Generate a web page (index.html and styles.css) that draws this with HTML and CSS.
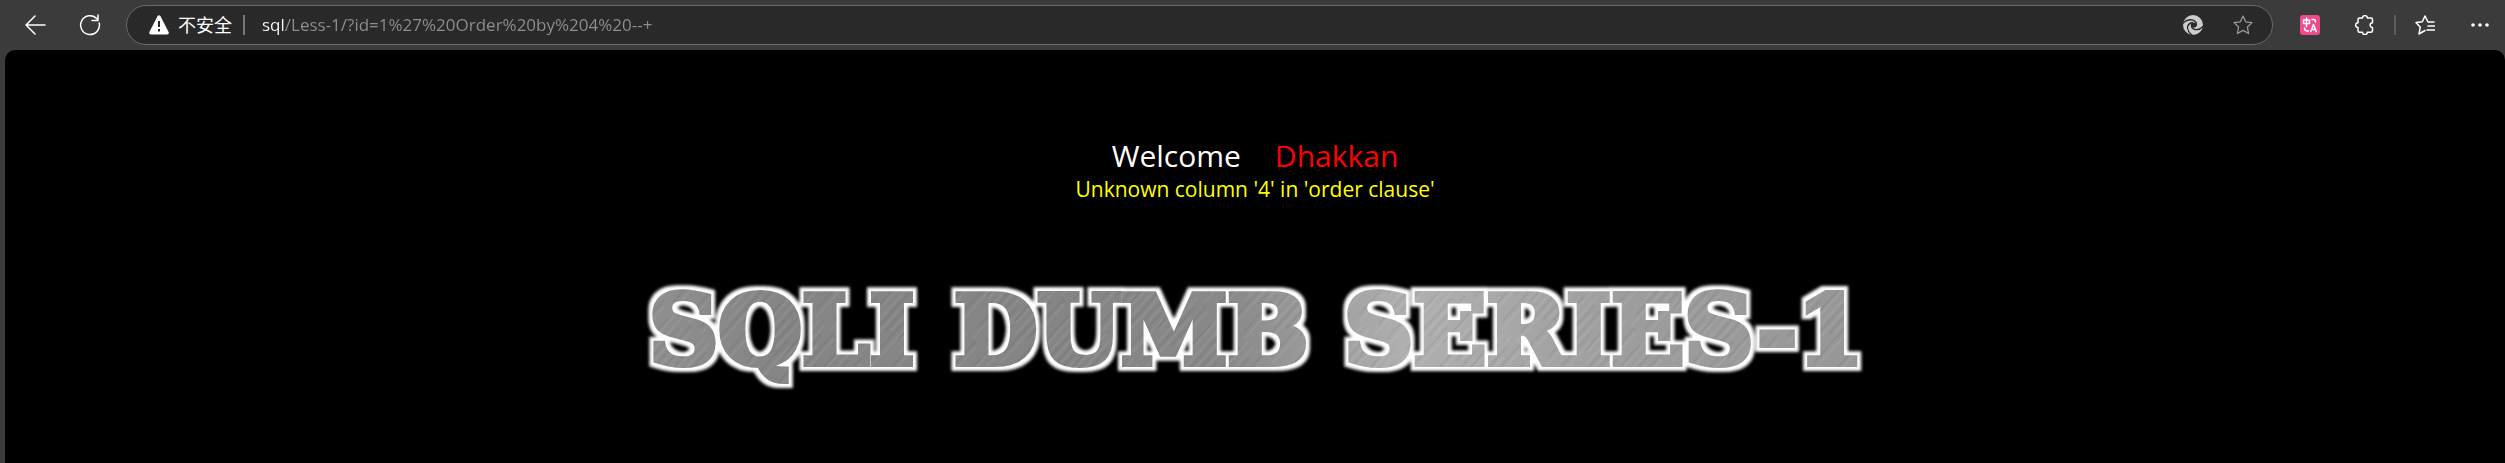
FILE: index.html
```html
<!DOCTYPE html>
<html lang="en">
<head>
<meta charset="utf-8">
<title>Less-1</title>
<link rel="stylesheet" href="styles.css">
</head>
<body>
<header class="toolbar">
  <nav class="nav">
    <button class="icon-button" type="button" aria-label="Back">
      <svg width="22" height="22" viewBox="0 0 22 22"><path d="M21 11H2M11 2L2 11l9 9"/></svg>
    </button>
    <button class="icon-button" type="button" aria-label="Reload">
      <svg width="22" height="22" viewBox="0 0 22 22"><path d="M20.2 9A9.4 9.4 0 1 1 18 4.8M19 1v5.5h-6"/></svg>
    </button>
  </nav>
  <form class="address">
    <button class="security" type="button">
      <svg width="20" height="20" viewBox="0 0 20 20"><path class="solid" d="M8.500 1.300Q10-.8 11.500 1.300L19.600 17q.8 2.400-1.600 2.600H2Q-.4 19.400.4 17z"/><path class="mark" d="M10 6v6M10 14v2.400"/></svg>
      <span>不安全</span>
    </button>
    <span class="divider"></span>
    <input class="url" type="text" aria-label="Address" value="sql/Less-1/?id=1%27%20Order%20by%204%20--+">
    <button class="icon-button" type="button" aria-label="Search this page">
      <svg width="20" height="20" viewBox="0 0 20 20"><circle class="disc" cx="10" cy="10" r="10"/><circle class="hole" cx="11" cy="10" r="2.600"/><path class="swirl" d="M0 8Q5 3.500 10 5.200 13.500 6.500 13.500 10M8.500 9.500Q8 13.500 12 14.500 16.500 15.500 20 11.500M9.500 7.500Q4.500 8.500 4.500 13 5 17 9 20"/></svg>
    </button>
    <button class="icon-button muted" type="button" aria-label="Add to favorites">
      <svg width="20" height="20" viewBox="0 0 20 20"><path d="M10 1l2.700 5.800 6.300.8-4.600 4.400 1.200 6.500L10 15.400l-5.600 3.100L5.600 12 1 7.600l6.300-.8z"/></svg>
    </button>
  </form>
  <div class="tools">
    <button class="icon-button" type="button" aria-label="Translate">
      <svg width="20" height="20" viewBox="0 0 20 20"><rect class="pink" width="20" height="20" rx="3"/><path class="glyph" d="M3.500 5h6v3.500h-6zM6.500 3V11.500M12 4.500h1.500q2 0 2 2.500M4.500 13q0 3 3 3h1M10.800 16.500L13.500 9.500l2.700 7M11.800 14.500h3.500"/></svg>
    </button>
    <button class="icon-button" type="button" aria-label="Extensions">
      <svg width="20" height="20" viewBox="0 0 20 20"><path d="M4.500 3H7.500a2.400 2.400 0 0 1 4.800 0H16q1.500 0 1.500 1.500V7.700a2.400 2.400 0 1 0 0 4.800v3.200q0 1.500-1.500 1.500h-3.700a2.400 2.400 0 0 1-4.800 0H4.500q-1.500 0-1.500-1.500v-3.200a2.400 2.400 0 0 1 0-4.800V4.500Q3 3 4.500 3z"/></svg>
    </button>
    <span class="divider"></span>
    <button class="icon-button" type="button" aria-label="Favorites">
      <svg width="20" height="20" viewBox="0 0 20 20"><path d="M19 7h-6L10 1 7.300 6.800 1 7.600l4.300 4.600L4 19l6-3.500M13 11h7M12 15h8"/></svg>
    </button>
    <button class="icon-button" type="button" aria-label="Settings and more">
      <svg width="20" height="20" viewBox="0 0 20 20"><g class="solid"><circle cx="3" cy="10" r="1.800"/><circle cx="10" cy="10" r="1.800"/><circle cx="17" cy="10" r="1.800"/></g></svg>
    </button>
  </div>
</header>
<main class="page">
  <h1 class="welcome"><span>Welcome</span><span class="name">Dhakkan</span></h1>
  <p class="message">Unknown column '4' in 'order clause'</p>
  <svg class="banner" viewBox="0 0 1260 140" role="img" aria-label="SQLI DUMB SERIES-1">
    <defs>
      <linearGradient id="sheen" gradientUnits="userSpaceOnUse" x1="0" y1="0" x2="1260" y2="0">
        <stop offset="0" stop-color="#919191"/><stop offset=".12" stop-color="#858585"/><stop offset=".35" stop-color="#858585"/>
        <stop offset=".48" stop-color="#898989"/><stop offset=".62" stop-color="#b0b0b0"/><stop offset=".8" stop-color="#9d9d9d"/><stop offset="1" stop-color="#969696"/>
      </linearGradient>
      <pattern id="metal" width="1260" height="140" patternUnits="userSpaceOnUse">
        <rect width="1260" height="140" fill="url(#sheen)"/>
        <rect width="1260" height="140" fill="url(#brush)"/>
      </pattern>
      <pattern id="brush" width="37" height="90" patternUnits="userSpaceOnUse" patternTransform="rotate(42)">
        <path d="M3 0v60M11 20v70M19 5v45M28 40v50M33 0v50" stroke="#fff" stroke-opacity=".12"/>
        <path d="M7 10v70M15 0v55M23 35v50M30 10v40" stroke="#000" stroke-opacity=".1"/>
      </pattern>
      <filter id="glow" x="-5%" y="-30%" width="110%" height="160%" color-interpolation-filters="sRGB">
        <feMorphology in="SourceAlpha" operator="dilate" radius="4" result="wide"/>
        <feGaussianBlur in="wide" stdDeviation="1.500" result="soft"/>
        <feFlood flood-color="#fff"/>
        <feComposite in2="soft" operator="in" result="halo"/>
        <feMerge><feMergeNode in="halo"/><feMergeNode in="SourceGraphic"/></feMerge>
      </filter>
    </defs>
    <g class="lettering" filter="url(#glow)">
      <text x="24" y="98">SQLI</text>
      <text x="329" y="98">DUMB</text>
      <text x="719" y="98">SERIES-1</text>
    </g>
  </svg>
</main>
</body>
</html>
```
FILE: styles.css
```css
* { box-sizing: border-box; }
body {
  margin: 0;
  min-height: 100vh;
  display: flex;
  flex-direction: column;
  background: #3b3b3b;
  font-family: "Open Sans", "Noto Sans", "Noto Sans CJK SC", sans-serif;
}
button, input { font: inherit; color: inherit; }
svg { display: block; }

.toolbar {
  display: flex;
  align-items: center;
  height: 50px;
  padding-right: 15px;
  color: #fff;
}
.nav { display: flex; gap: 33px; padding: 0 25px 0 24px; }
.icon-button {
  padding: 0;
  border: 0;
  background: none;
}
.icon-button path {
  fill: none;
  stroke: #fff;
  stroke-width: 1.5;
  stroke-linejoin: round;
  stroke-linecap: round;
}
.muted path { stroke: #999; stroke-width: 1.3; }
.solid { fill: #fff; }
.mark { stroke: #292929; stroke-width: 2; }
.disc { fill: #ccc; }
.icon-button .swirl { stroke: #292929; stroke-width: 1.3; }
.hole { fill: #292929; }
.pink { fill: #f04a8c; }

.address {
  flex: 1;
  display: flex;
  align-items: center;
  height: 40px;
  padding: 0 19px 0 22px;
  border: 1px solid #6b6b6b;
  border-radius: 20px;
  background: #292929;
}
.address .icon-button + .icon-button { margin-left: 30px; }
.security {
  display: flex;
  align-items: center;
  gap: 9px;
  padding: 0;
  border: 0;
  background: none;
  font-size: 18px;
  line-height: 24px;
}
.divider { width: 2px; height: 20px; background: #777; }
.address .divider { margin: 0 17px 0 11px; }
.url {
  flex: 1;
  min-width: 0;
  padding: 0;
  border: 0;
  outline: 0;
  font-size: 17px;
  line-height: 24px;
  background: linear-gradient(90deg, #fff 22px, #8f8f8f 22px);
  background-clip: text;
  -webkit-background-clip: text;
  -webkit-text-fill-color: transparent;
}

.tools { display: flex; align-items: center; padding-left: 27px; }
.tools .icon-button + .icon-button { margin-left: 35px; }
.tools .divider { margin: 0 19px; background: #5c5c5c; }

.page {
  flex: 1;
  display: flex;
  flex-direction: column;
  align-items: center;
  margin-left: 5px;
  padding-top: 85px;
  border-radius: 10px 10px 0 0;
  background: #000;
}
.welcome {
  display: flex;
  gap: 34px;
  margin: 0;
  font-size: 30px;
  font-weight: 400;
  line-height: 42px;
  color: #fff;
}
.name { color: #f00; }
.message {
  margin: 0;
  font-size: 21px;
  font-weight: 500;
  line-height: 24px;
  color: #ff0;
}
.banner { width: 1260px; max-width: 100%; margin-top: 65px; }
.lettering {
  font-family: "DejaVu Serif", serif;
  font-size: 96px;
  font-weight: 700;
  fill: url(#metal);
  stroke: url(#metal);
  stroke-width: 6px;
}
```
